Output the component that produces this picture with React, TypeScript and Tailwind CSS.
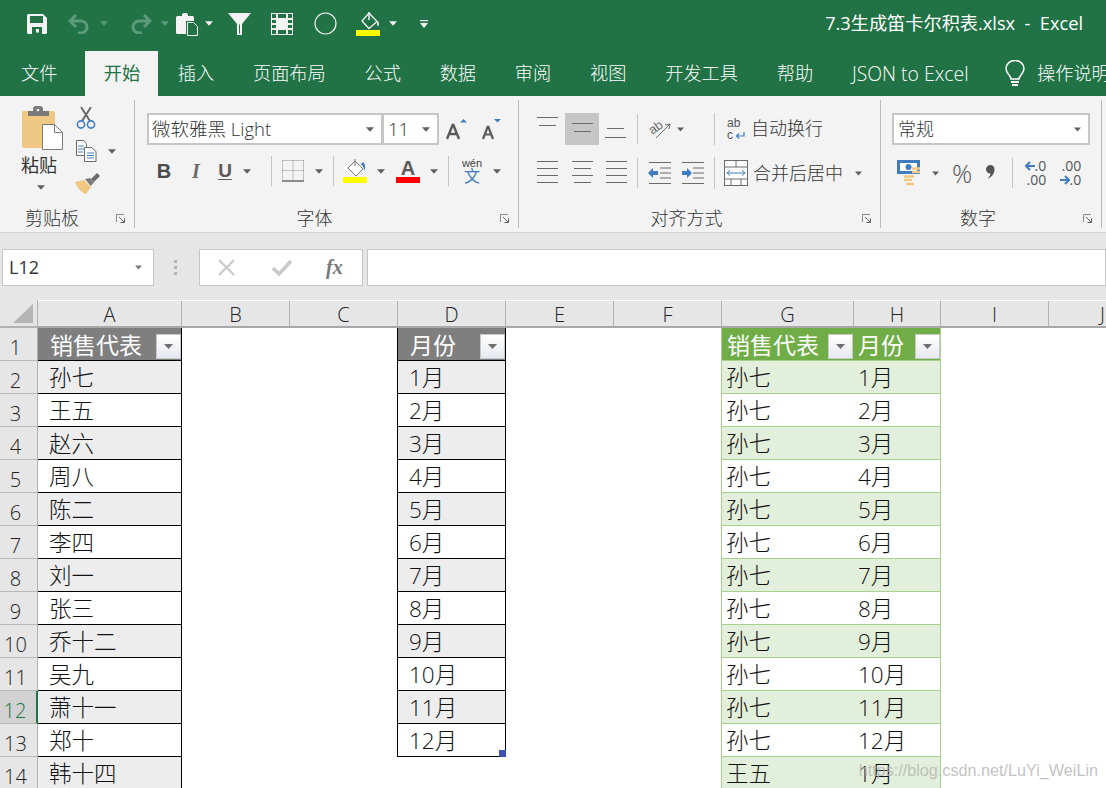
import React from "react";

const Caret = ({ c = "#5f5f5f", w = 9, cls = "" }: { c?: string; w?: number; cls?: string }) => (
  <svg width={w} height={5} viewBox="0 0 9 5" className={"shrink-0 " + cls}><path d="M0 0h9L4.5 5z" fill={c} /></svg>
);
const Sep = ({ h = 30, cls = "" }: { h?: number; cls?: string }) => (
  <div style={{ height: h }} className={"w-px shrink-0 bg-[#c6c6c6] " + cls} />
);
const Lines = ({ rows, w = 21, h = 32, cls = "", c = "#6a6a6a" }: { rows: [number, number][]; w?: number; h?: number; cls?: string; c?: string }) => (
  <svg width={w} height={h} viewBox={`0 0 ${w} ${h}`} className={"shrink-0 " + cls}>
    {rows.map(([x, y], i) => <rect key={i} x={x} y={y} width={w - 2 * x} height={1} fill={c} />)}
  </svg>
);
const Expander = () => (
  <svg width={11} height={11} viewBox="0 0 11 11" className="absolute right-[7px] bottom-[3px]">
    <path d="M0.5 8V0.5H8" fill="none" stroke="#8a8a8a" />
    <path d="M3 3l5 5M8.5 4.5v4h-4" fill="none" stroke="#5f5f5f" />
  </svg>
);

const Group = ({ w, label, children, labelCls = "" }: { w: string; label: string; children: React.ReactNode; labelCls?: string }) => (
  <div className={"relative h-full shrink-0 flex flex-col border-r border-[#b9b9b9] " + w}>
    <div className="flex-1 min-h-0">{children}</div>
    <div className={"h-[24px] text-center text-[18px] leading-[24px] text-[#333] font-light -mb-[2px] " + labelCls}>{label}</div>
    <Expander />
  </div>
);

const tabs = ["插入", "页面布局", "公式", "数据", "审阅", "视图", "开发工具", "帮助"];

const aNames = ["孙七", "王五", "赵六", "周八", "陈二", "李四", "刘一", "张三", "乔十二", "吴九", "萧十一", "郑十", "韩十四"];
const months = ["1月", "2月", "3月", "4月", "5月", "6月", "7月", "8月", "9月", "10月", "11月", "12月"];
const letters = ["A", "B", "C", "D", "E", "F", "G", "H", "I", "J"];

const FilterBtn = () => (
  <div className="w-[25px] h-[25px] shrink-0 self-end mb-px flex items-center justify-center border border-[#c9c9c9] bg-linear-to-b from-white to-[#e6e9f0]">
    <Caret c="#6d6d6d" w={11} />
  </div>
);

const HeadCell = ({ text, cls }: { text: string; cls: string }) => (
  <div className={"flex justify-between items-center text-[23px] text-white font-normal " + cls}>
    <span className="pt-[2px]">{text}</span>
    <FilterBtn />
  </div>
);

const Blank = ({ cls = "" }: { cls?: string }) => <div className={"bg-white " + cls} />;

const Body = ({ text, cls }: { text?: string; cls: string }) => (
  <div className={"flex items-center pt-px text-[22.500px] font-light text-[#111] " + cls}>{text}</div>
);

function Sheet() {
  const rows = Array.from({ length: 14 }, (_, i) => i);
  return (
    <div className="grid grid-cols-[38px_144px_108px_108px_108px_108px_108px_132px_87px_108px_108px] grid-rows-[28px] auto-rows-[33px]">
      <div className="relative bg-[#e6e6e6] border-r border-b-2 border-[#b1b1b1] flex items-end justify-end pr-[4px] pb-[3px]">
        <svg width={20} height={19} viewBox="0 0 20 19"><path d="M20 0v19H0z" fill="#b5b5b5" /></svg>
      </div>
      {letters.map((l) => (
        <div key={l} className="bg-[#e6e6e6] mt-px border-r border-b-2 border-b-[#a8a8a8] border-r-[#b1b1b1] flex items-end justify-center text-[20px] leading-[22px] font-light text-[#222]">
          {l}
        </div>
      ))}
      {rows.map((r) => {
        const sel = r === 11;
        const odd = r % 2 === 1;
        const gBg = odd ? "bg-[#e2efda]" : "bg-white";
        const tableRowA = odd ? "bg-[#ededed]" : "bg-white";
        const showD = r <= 12;
        return (
          <React.Fragment key={r}>
            <div className={"flex items-end justify-center pr-[6px] text-[20px] leading-[25px] font-light border-b border-[#b9b9b9] " + (sel ? "bg-[#d2d2d2] text-[#217346] border-r-2 border-r-[#217346]" : "bg-[#e6e6e6] text-[#222] border-r border-r-[#b1b1b1]")}>
              {r + 1}
            </div>
            {r === 0 ? (
              <HeadCell text="销售代表" cls="bg-[#7f7f7f] border-r border-b border-black pl-3" />
            ) : (
              <Body text={aNames[r - 1]} cls={tableRowA + " border-r border-b border-black pl-[11px]"} />
            )}
            <Blank />
            <Blank cls={showD ? "border-r border-black" : ""} />
            {r === 0 ? (
              <HeadCell text="月份" cls="bg-[#7f7f7f] border-r border-b border-black pl-3" />
            ) : showD ? (
              <div className="relative flex">
                <Body text={months[r - 1]} cls={tableRowA + " flex-1 border-r border-b border-black pl-[11px]"} />
                {r === 12 && <div className="absolute right-0 bottom-0 w-[7px] h-[7px] bg-[#3f51b5]" />}
              </div>
            ) : (
              <Blank />
            )}
            <Blank />
            <Blank cls="border-r border-[#a9d08e]" />
            {r === 0 ? (
              <HeadCell text="销售代表" cls="bg-[#70ad47] border-b border-[#a9d08e] pl-[5px] pr-px" />
            ) : (
              <Body text={r <= 12 ? "孙七" : "王五"} cls={gBg + " border-b border-[#a9d08e] pl-[4px]"} />
            )}
            {r === 0 ? (
              <HeadCell text="月份" cls="bg-[#70ad47] border-r border-b border-[#a9d08e] pl-[4px]" />
            ) : (
              <Body text={months[r <= 12 ? r - 1 : 0]} cls={gBg + " border-r border-b border-[#a9d08e] pl-[4px]"} />
            )}
            <Blank />
            <Blank />
          </React.Fragment>
        );
      })}
    </div>
  );
}

const ArrowL = () => (
  <svg width={10} height={10} viewBox="0 0 10 10" className="shrink-0"><path d="M5 1L1 5l4 4M1 5h9" fill="none" stroke="#3f7cc0" strokeWidth={2} /></svg>
);
const ArrowR = () => (
  <svg width={10} height={10} viewBox="0 0 10 10" className="shrink-0"><path d="M5 1l4 4-4 4M9 5H0" fill="none" stroke="#3f7cc0" strokeWidth={2} /></svg>
);

export default function App() {
  return (
    <div className="relative w-[1106px] h-[788px] overflow-hidden bg-white font-['Open_Sans','Noto_Sans_CJK_SC',sans-serif]">
      {/* Title bar */}
      <div className="h-[51px] bg-[#217346] flex items-center text-white pb-[4px]">
        <svg width={20} height={20} viewBox="0 0 20 20" className="ml-[27px] shrink-0">
          <path fillRule="evenodd" d="M0 1.5A1.5 1.5 0 011.5 0H16l4 4v14.5a1.5 1.5 0 01-1.5 1.5h-17A1.5 1.5 0 010 18.5zM3 2v7h13V2zM5 13v7h10v-7zM9 15h3v3.5H9z" fill="#f3f3f3" />
        </svg>
        <svg width={22} height={20} viewBox="0 0 22 20" className="ml-[21px] shrink-0">
          <path d="M8 1L2 7l6 6M2 7h11a6 6 0 016 6v0a6 6 0 01-6 6h-3" fill="none" stroke="#5b9b7b" strokeWidth={3} />
        </svg>
        <Caret c="#5b9b7b" w={8} cls="ml-[10px]" />
        <svg width={22} height={20} viewBox="0 0 22 20" className="ml-[22px] shrink-0">
          <path d="M14 1l6 6-6 6M20 7H9a6 6 0 00-6 6v0a6 6 0 006 6h3" fill="none" stroke="#5b9b7b" strokeWidth={3} />
        </svg>
        <Caret c="#5b9b7b" w={8} cls="ml-[9px]" />
        <svg width={22} height={24} viewBox="0 0 22 24" className="ml-[7px] shrink-0">
          <path d="M1.5 4H6V2.5A2 2 0 018 1h2a2 2 0 012 1.5V4h4.500A1.500 1.500 0 0118 5.500V9H10v13H1.500A1.500 1.500 0 010 20.500V5.500A1.500 1.500 0 011.500 4z" fill="#f3f3f3" />
          <path d="M11.500 10.500h6l4 4v9h-10z" fill="#217346" stroke="#f3f3f3" />
        </svg>
        <Caret c="#f3f3f3" w={8} cls="ml-[7px]" />
        <svg width={23} height={22} viewBox="0 0 23 22" className="ml-[15px] shrink-0">
          <path d="M0 0h23L14 11v11H9V11z" fill="#f3f3f3" />
          <path d="M11.500 11.500V20.500" stroke="#217346" />
        </svg>
        <svg width={22} height={22} viewBox="0 0 22 22" className="ml-[20px] shrink-0">
          <path fillRule="evenodd" d="M0 0h22v22H0zM1 1v4h4V1zM7 1v4h8V1zM17 1v4h4V1zM1 7v3h4V7zM17 7v3h4V7zM1 12v3h4v-3zM17 12v3h4v-3zM1 17v4h4v-4zM7 17v4h8v-4zM17 17v4h4v-4z" fill="#f3f3f3" />
        </svg>
        <svg width={23} height={23} viewBox="0 0 23 23" className="ml-[21px] shrink-0">
          <circle cx={11.500} cy={11.500} r={10.500} fill="none" stroke="#f3f3f3" strokeWidth={1.200} />
        </svg>
        <svg width={24} height={25} viewBox="0 0 24 25" className="ml-[19px] shrink-0">
          <path d="M13 2l8 8.500-8 7-7-7.500z" fill="none" stroke="#f3f3f3" strokeWidth={1.300} />
          <path d="M13 1v8" stroke="#f3f3f3" strokeWidth={1.500} />
          <path d="M22 10c1.500 2 1 4 0 5.500-1-1-1.500-3.500 0-5.500z" fill="#f3f3f3" />
          <rect x={0} y={19} width={24} height={6} fill="#ffff00" />
        </svg>
        <Caret c="#f3f3f3" w={8} cls="ml-[9px]" />
        <svg width={8} height={8} viewBox="0 0 8 8" className="ml-[23px] shrink-0">
          <path d="M0 0h8v1.200H0zM0 3h8L4 8z" fill="#f3f3f3" />
        </svg>
        <div className="ml-auto mr-[23px] text-[18.200px] font-normal whitespace-pre">7.3生成笛卡尔积表.xlsx  -  Excel</div>
      </div>

      {/* Tabs */}
      <div className="h-[45px] bg-[#217346] flex items-stretch overflow-hidden text-white text-[18.200px] font-light whitespace-nowrap pl-[2px]">
        <div className="shrink-0 px-[19px] mr-[9px] flex items-center">文件</div>
        <div className="shrink-0 w-[73px] bg-[#f3f3f3] text-[#217346] flex items-center justify-center font-normal">开始</div>
        {tabs.map((t) => (
          <div key={t} className="shrink-0 px-[19.400px] flex items-center">{t}</div>
        ))}
        <div className="shrink-0 px-[19.400px] flex items-center text-[19.400px]">JSON to Excel</div>
        <svg width={22} height={28} viewBox="0 0 22 28" className="ml-[16px] self-center shrink-0">
          <path d="M7 19c0-4-5-5-5-10.500a9 8 0 0118 0C20 14 15 15 15 19z" fill="none" stroke="#fff" strokeWidth={1.500} />
          <path d="M7 22h8M8 25h6" stroke="#fff" strokeWidth={1.800} />
        </svg>
        <div className="shrink-0 ml-[11px] flex items-center">操作说明搜索</div>
      </div>

      {/* Ribbon */}
      <div className="h-[137px] bg-[#f3f3f3] border-b border-[#d0d0d0] flex items-stretch pt-[4px] pb-[4px] text-[#333]">
        <Group w="w-[135px]" label="剪贴板" labelCls="pr-[30px]">
          <div className="flex pl-[21px] pt-[6px]">
            <div className="w-[55px] flex flex-col items-start">
              <svg width={42} height={44} viewBox="0 0 42 44" className="shrink-0">
                <rect x={1} y={5} width={33} height={37} rx={2} fill="#efc981" />
                <path d="M7 5h5V3a3 3 0 013-3h4a3 3 0 013 3v2h6v5H7z" fill="#7a7a7a" />
                <circle cx={17} cy={4} r={1.300} fill="#f3f3f3" />
                <path d="M21.500 18.500h12l8 8v17h-20z" fill="#fff" stroke="#7a7a7a" />
                <path d="M33.500 18.500v8h8" fill="none" stroke="#7a7a7a" />
              </svg>
              <div className="text-[18px] font-normal leading-[24px] mt-[3px]">粘贴</div>
              <Caret w={8} cls="ml-[16px] mt-[8px]" />
            </div>
            <div className="flex flex-col items-start">
              <svg width={20} height={22} viewBox="0 0 20 22" className="mt-px">
                <path d="M5 0l9 14M15 0L6 14" stroke="#6a6a6a" strokeWidth={2} />
                <circle cx={5} cy={17.500} r={3.600} fill="none" stroke="#3f7cc0" strokeWidth={1.600} />
                <circle cx={15} cy={17.500} r={3.600} fill="none" stroke="#3f7cc0" strokeWidth={1.600} />
              </svg>
              <div className="flex items-center mt-[11px]">
                <svg width={21} height={22} viewBox="0 0 21 22">
                  <path d="M0.500 0.500h7l3 3v12h-10z" fill="#fff" stroke="#6a6a6a" />
                  <path d="M8.500 7.500h7l4.500 4v10h-11.500z" fill="#fff" stroke="#6a6a6a" />
                  <path d="M2 6h6M2 9h6M2 12h5M11 13h7M11 15.500h7M11 18h7" stroke="#3f7cc0" />
                </svg>
                <Caret w={8} cls="ml-[11px]" />
              </div>
              <svg width={25} height={21} viewBox="0 0 25 21" className="mt-[11px] -ml-[1px]">
                <path d="M0 9l9-2 7 7-5 7c-3 0-9-6-11-12z" fill="#efc981" />
                <path d="M10 6l4 5 2 2 3-4-4-4z" fill="#7a7a7a" />
                <path d="M16 6l6-6 3 3-6 6z" fill="#6a6a6a" />
              </svg>
            </div>
          </div>
        </Group>

        <Group w="w-[384px]" label="字体" labelCls="pr-[24px]">
          <div className="pl-[12px] pt-[13px]">
            <div className="flex items-center">
              <div className="w-[236px] h-[32px] bg-white border-2 border-[#c6c6c6] flex items-center justify-between pl-[3px] pr-[7px] text-[18.500px] font-light">
                <span>微软雅黑 Light</span>
                <Caret w={8} />
              </div>
              <div className="w-[57px] h-[32px] -ml-[1px] bg-white border-2 border-[#c6c6c6] flex items-center justify-between pl-[4px] pr-[7px] text-[18.500px] font-light">
                <span>11</span>
                <Caret w={8} />
              </div>
              <svg width={21} height={21} viewBox="0 0 21 21" className="ml-[7px]">
                <path d="M7 5L1 20M7 5l6 15M3.500 15h7" stroke="#5a5a5a" strokeWidth={2.400} fill="none" />
                <path d="M14 3.500L17.500 0 21 3.500z" fill="#3f7cc0" />
              </svg>
              <svg width={20} height={21} viewBox="0 0 20 21" className="ml-[14px]">
                <path d="M7 7L2 20M7 7l5 13M4 15.500h6" stroke="#5a5a5a" strokeWidth={2.200} fill="none" />
                <path d="M13 0h7l-3.500 3.500z" fill="#3f7cc0" />
              </svg>
            </div>
            <div className="flex items-center mt-[11px] h-[30px]">
              <span className="ml-[9px] w-[16px] text-center text-[20px] font-bold text-[#4a4a4a] font-['Liberation_Sans',sans-serif]">B</span>
              <span className="ml-[17px] w-[14px] text-center text-[20px] font-bold italic text-[#6a6a6a] font-['Liberation_Serif',serif]">I</span>
              <span className="ml-[14px] w-[16px] text-center text-[19px] font-bold underline underline-offset-2 text-[#5a5a5a] font-['Liberation_Sans',sans-serif]">U</span>
              <Caret w={8} cls="ml-[10px]" />
              <Sep cls="ml-[20px]" />
              <svg width={22} height={22} viewBox="0 0 22 22" className="ml-[10px]">
                <path d="M0.500 0.500h21M0.500 0.500v20M21.500 0.500v20M11 0.500v20M0.500 10.500h21" stroke="#8a8a8a" strokeDasharray="1 1" fill="none" />
                <path d="M0 21h22" stroke="#6a6a6a" strokeWidth={1.500} />
              </svg>
              <Caret w={8} cls="ml-[11px]" />
              <Sep cls="ml-[10px]" />
              <svg width={24} height={24} viewBox="0 0 24 24" className="ml-[9px]">
                <path d="M12 2l8 8-7 7-8-8z" fill="#fff" stroke="#777" />
                <path d="M12 0v7" stroke="#777" />
                <path d="M20 3c3 3 2 6 2 9-1-2-2-5-4-7z" fill="#3f7cc0" />
                <rect y={18} width={24} height={6} fill="#ffff00" />
              </svg>
              <Caret w={8} cls="ml-[10px]" />
              <div className="ml-[11px] w-[24px] h-[24px] flex flex-col items-center justify-between">
                <span className="text-[20px] leading-[18px] font-bold text-[#5a5a5a] font-['Liberation_Sans',sans-serif]">A</span>
                <div className="w-[24px] h-[6px] bg-[#ff0000]" />
              </div>
              <Caret w={8} cls="ml-[10px]" />
              <Sep cls="ml-[10px]" />
              <div className="ml-[12px] w-[22px] flex flex-col items-center text-center">
                <span className="text-[11px] leading-[10px] font-normal text-[#444] font-['Liberation_Sans',sans-serif]">wén</span>
                <span className="text-[16px] leading-[17px] text-[#3f7cc0]">文</span>
              </div>
              <Caret w={8} cls="ml-[10px]" />
            </div>
          </div>
        </Group>

        <Group w="w-[362px]" label="对齐方式" labelCls="pr-[26px]">
          <div className="pl-[18px] pt-[13px]">
            <div className="flex items-center h-[32px]">
              <Lines rows={[[0, 4], [2, 12]]} />
              <div className="ml-[7px] w-[34px] h-[32px] bg-[#c6c6c6] flex items-center justify-center">
                <Lines rows={[[0, 10], [2, 18]]} />
              </div>
              <Lines rows={[[2, 15], [0, 24]]} cls="ml-[6px]" />
              <Sep cls="ml-[11px]" />
              <svg width={22} height={22} viewBox="0 0 22 22" className="ml-[11px]">
                <text x={0} y={13} fontSize={13} fill="#6a6a6a" transform="rotate(-35 8 10)" fontFamily="Liberation Sans">ab</text>
                <path d="M7 20L21 6M21 6l-5 1M21 6l-1 5" stroke="#6a6a6a" fill="none" />
              </svg>
              <Caret w={7} cls="ml-[6px]" />
              <Sep h={32} cls="ml-[30px]" />
              <svg width={19} height={24} viewBox="0 0 19 24" className="ml-[12px]">
                <text x={0} y={10} fontSize={12} fill="#555" fontFamily="Liberation Sans">ab</text>
                <text x={0} y={22} fontSize={12} fill="#555" fontFamily="Liberation Sans">c</text>
                <path d="M17 15v4h-7M12 16.500L9.500 19l2.500 2.500" stroke="#3f7cc0" fill="none" strokeWidth={1.200} />
              </svg>
              <span className="ml-[5px] text-[18px] font-light whitespace-nowrap -mt-[2px]">自动换行</span>
            </div>
            <div className="flex items-center h-[32px] mt-[12px]">
              <Lines rows={[[0, 4], [0, 11], [0, 18], [0, 25]]} />
              <Lines rows={[[0, 4], [2, 11], [0, 18], [2, 25]]} cls="ml-[14px]" />
              <Lines rows={[[0, 4], [0, 11], [0, 18], [0, 25]]} cls="ml-[13px]" />
              <Sep cls="ml-[10px]" />
              <svg width={23} height={22} viewBox="0 0 23 22" className="ml-[10px]">
                <path d="M1 0.500h22M12 6h11M12 11h11M12 16h11M1 21.500h22" stroke="#6a6a6a" />
                <path d="M0 11l5-5v3h5v4H5v3z" fill="#3f7cc0" />
              </svg>
              <svg width={23} height={22} viewBox="0 0 23 22" className="ml-[11px]">
                <path d="M0 0.500h22M11 6h11M11 11h11M11 16h11M0 21.500h22" stroke="#6a6a6a" />
                <path d="M10 11L5 6v3H0v4h5v3z" fill="#3f7cc0" />
              </svg>
              <Sep h={32} cls="ml-[9px]" />
              <svg width={24} height={26} viewBox="0 0 24 26" className="ml-[9px]">
                <rect x={0.500} y={0.500} width={23} height={25} fill="#fff" stroke="#6a6a6a" />
                <path d="M0 7h24M0 19h24M12 0v7M7 19v7M17 19v7" stroke="#6a6a6a" />
                <path d="M3 13h18M3 13l3-2.500M3 13l3 2.500M21 13l-3-2.500M21 13l-3 2.500" stroke="#3f7cc0" fill="none" />
              </svg>
              <span className="ml-[5px] text-[18px] font-light whitespace-nowrap">合并后居中</span>
              <Caret w={7} cls="ml-[12px]" />
            </div>
          </div>
        </Group>

        <Group w="w-[221px]" label="数字" labelCls="pr-[26px]">
          <div className="pl-[11px] pt-[13px]">
            <div className="w-[198px] h-[32px] bg-white border-2 border-[#c6c6c6] flex items-center justify-between pl-[4px] pr-[7px] text-[18px] font-light">
              <span>常规</span>
              <Caret w={7} />
            </div>
            <div className="flex items-center h-[32px] mt-[12px]">
              <svg width={24} height={26} viewBox="0 0 24 26" className="ml-[5px]">
                <rect x={0} y={0} width={23} height={14} fill="#3f7cc0" />
                <rect x={3} y={3} width={17} height={8} fill="#fff" />
                <circle cx={11.500} cy={7} r={3} fill="#3f7cc0" />
                <path d="M7 16.500h10M7 20h8M9 24h8" stroke="#efc981" strokeWidth={2.500} />
                <path d="M15 8.500h8M15 12h8" stroke="#efc981" strokeWidth={2.500} />
              </svg>
              <Caret w={7} cls="ml-[11px]" />
              <span className="ml-[13px] text-[25px] leading-none font-light text-[#555]">%</span>
              <svg width={9} height={14} viewBox="0 0 9 14" className="ml-[14px] -mt-[3px] shrink-0">
                <path d="M4 0a4.200 4.200 0 014.500 4.500C8.500 9 5 12.500 1.500 14 3.500 11.500 4.500 10 4.500 8.500A4.200 4.200 0 014 0z" fill="#555" />
              </svg>
              <Sep cls="ml-[17px]" />
              <div className="ml-[9px] w-[24px] flex flex-col items-end text-[14px] leading-[14px] font-normal text-[#555] whitespace-nowrap">
                <span className="flex items-center"><ArrowL /><span>.0</span></span>
                <span>.00</span>
              </div>
              <div className="ml-[11px] w-[24px] flex flex-col items-end text-[14px] leading-[14px] font-normal text-[#555] whitespace-nowrap">
                <span>.00</span>
                <span className="flex items-center"><ArrowR /><span>.0</span></span>
              </div>
            </div>
          </div>
        </Group>
        <div className="flex-1" />
      </div>

      {/* Formula bar */}
      <div className="h-[67px] bg-[#e6e6e6] flex items-center pl-[2px] pt-[2px] pb-[1px]">
        <div className="w-[152px] h-[37px] bg-white border border-[#c6c6c6] flex items-center justify-between pl-[6px] pr-[11px] text-[18px] font-normal text-[#333]">
          <span>L12</span>
          <Caret w={7} c="#7a7a7a" />
        </div>
        <div className="ml-[20px] w-[3px] h-[15px] flex flex-col justify-between">
          <div className="h-[3px] bg-[#b4b4b4]" />
          <div className="h-[3px] bg-[#b4b4b4]" />
          <div className="h-[3px] bg-[#b4b4b4]" />
        </div>
        <div className="ml-[22px] w-[164px] h-[37px] bg-white border border-[#c6c6c6] flex items-center">
          <svg width={17} height={17} viewBox="0 0 17 17" className="ml-[18px]">
            <path d="M1 1l15 15M16 1L1 16" stroke="#c9c9c9" strokeWidth={2.200} />
          </svg>
          <svg width={20} height={17} viewBox="0 0 20 17" className="ml-[37px]">
            <path d="M1 9l6 6L19 2" stroke="#c9c9c9" strokeWidth={3.500} fill="none" />
          </svg>
          <span className="ml-[34px] text-[20px] italic font-bold text-[#777] font-['Liberation_Serif',serif] whitespace-nowrap">fx</span>
        </div>
        <div className="ml-[4px] flex-1 h-[37px] bg-white border border-[#c6c6c6]" />
      </div>

      <Sheet />

      <div className="absolute right-[8px] bottom-[8px] text-[16.200px] leading-[20px] text-[#b3b3b3]/80 font-['Liberation_Sans',sans-serif]">
        https://blog.csdn.net/LuYi_WeiLin
      </div>
    </div>
  );
}
